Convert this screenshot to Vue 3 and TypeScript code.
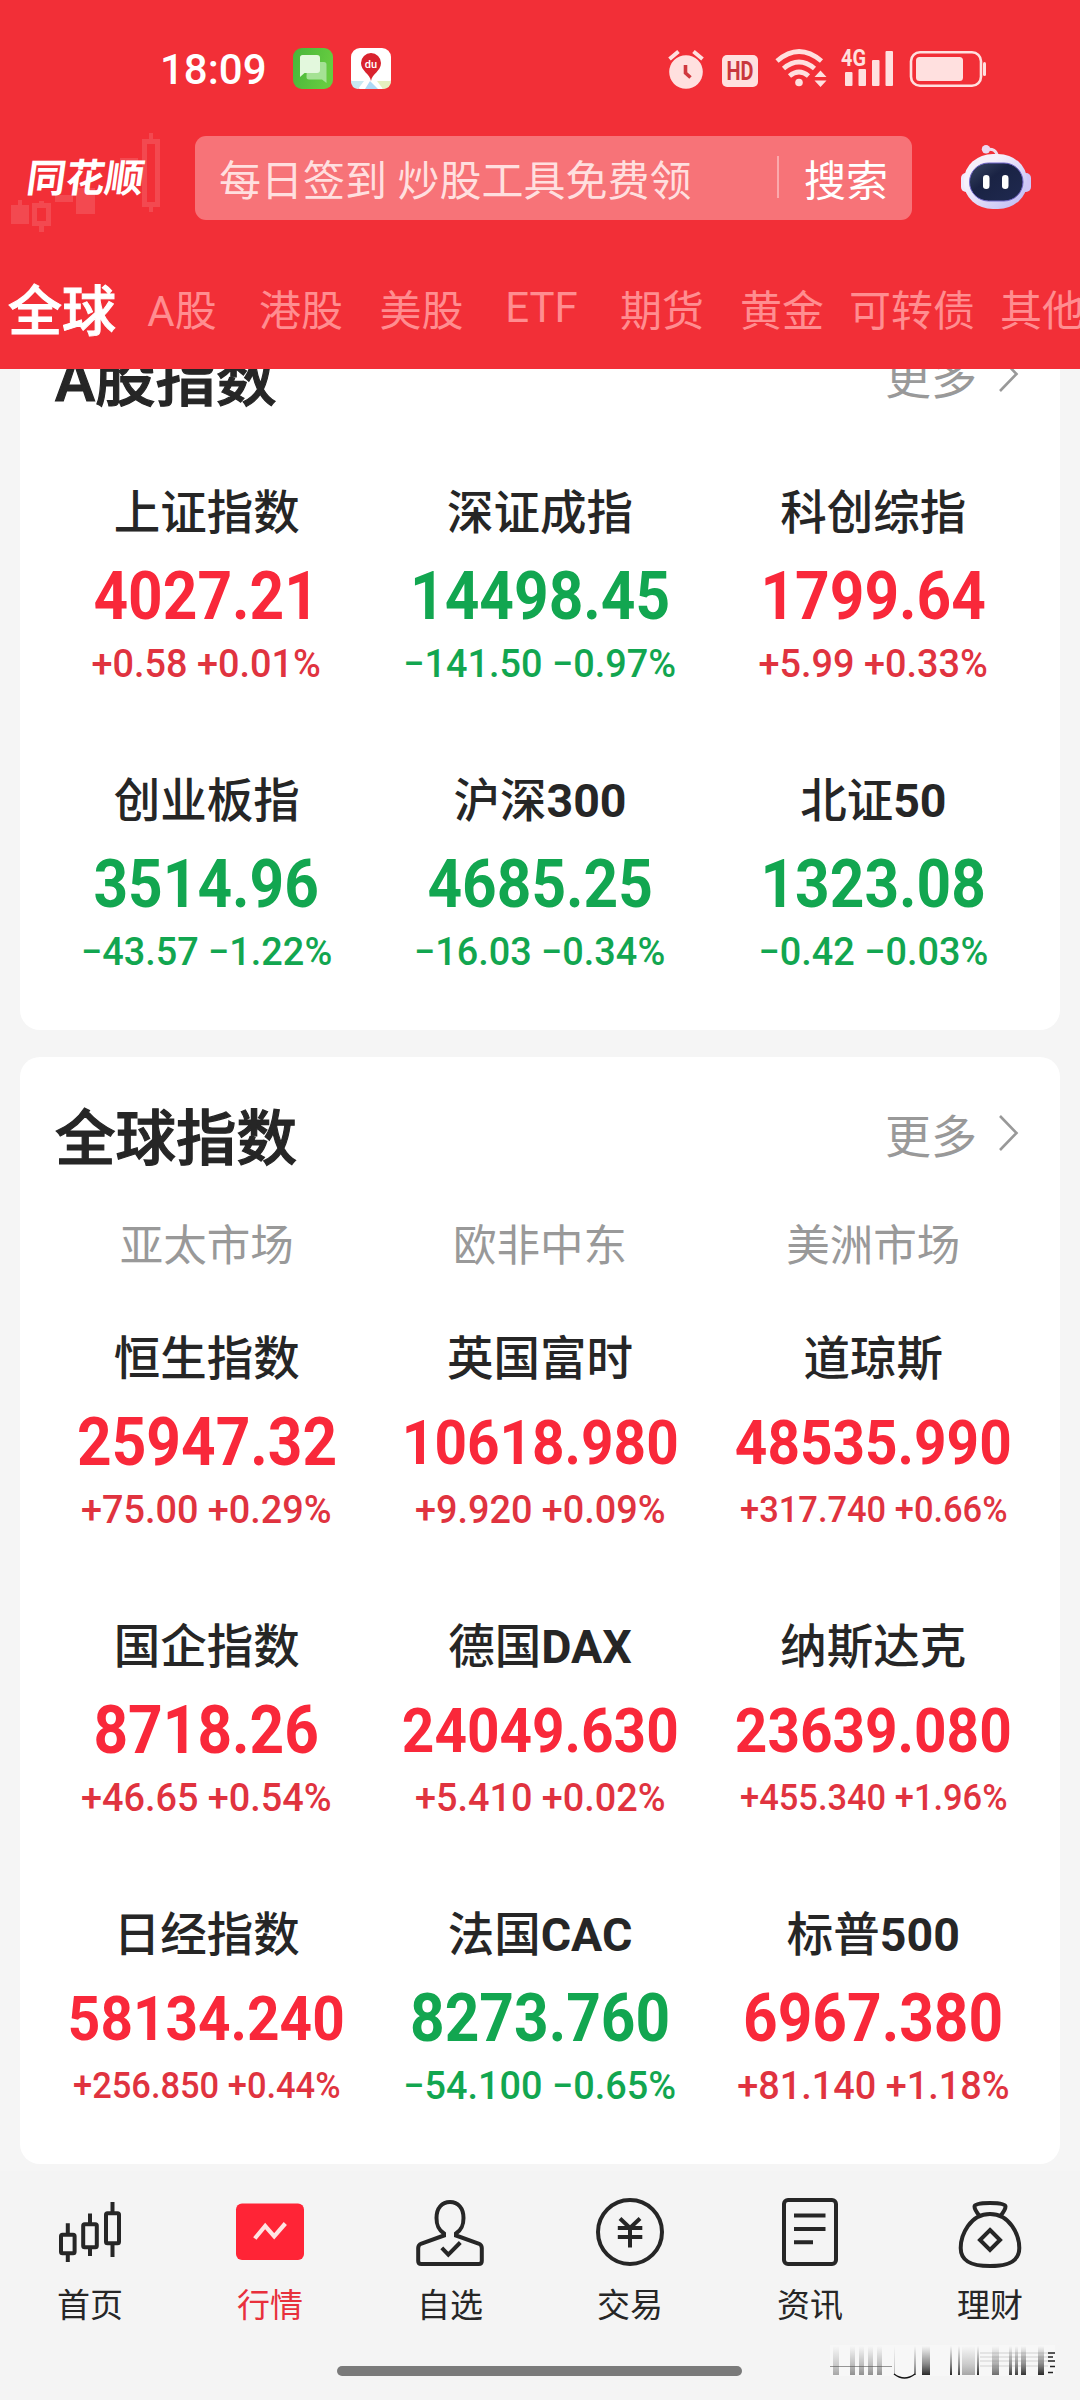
<script setup lang="ts">
type Trend = 'up' | 'down'

interface Quote {
  name: string
  code?: string
  value: string
  delta: string
  trend: Trend
}

interface Tab {
  label: string
  width: number
}

const tabs: Tab[] = [
  { label: 'A股', width: 116 },
  { label: '港股', width: 122 },
  { label: '美股', width: 119 },
  { label: 'ETF', width: 121 },
  { label: '期货', width: 120 },
  { label: '黄金', width: 120 },
  { label: '可转债', width: 140 },
  { label: '其他', width: 120 },
]

const domestic: Quote[] = [
  { name: '上证指数', value: '4027.21', delta: '+0.58 +0.01%', trend: 'up' },
  { name: '深证成指', value: '14498.45', delta: '−141.50 −0.97%', trend: 'down' },
  { name: '科创综指', value: '1799.64', delta: '+5.99 +0.33%', trend: 'up' },
  { name: '创业板指', value: '3514.96', delta: '−43.57 −1.22%', trend: 'down' },
  { name: '沪深', code: '300', value: '4685.25', delta: '−16.03 −0.34%', trend: 'down' },
  { name: '北证', code: '50', value: '1323.08', delta: '−0.42 −0.03%', trend: 'down' },
]

const markets: string[] = ['亚太市场', '欧非中东', '美洲市场']

const overseas: Quote[] = [
  { name: '恒生指数', value: '25947.32', delta: '+75.00 +0.29%', trend: 'up' },
  { name: '英国富时', value: '10618.980', delta: '+9.920 +0.09%', trend: 'up' },
  { name: '道琼斯', value: '48535.990', delta: '+317.740 +0.66%', trend: 'up' },
  { name: '国企指数', value: '8718.26', delta: '+46.65 +0.54%', trend: 'up' },
  { name: '德国', code: 'DAX', value: '24049.630', delta: '+5.410 +0.02%', trend: 'up' },
  { name: '纳斯达克', value: '23639.080', delta: '+455.340 +1.96%', trend: 'up' },
  { name: '日经指数', value: '58134.240', delta: '+256.850 +0.44%', trend: 'up' },
  { name: '法国', code: 'CAC', value: '8273.760', delta: '−54.100 −0.65%', trend: 'down' },
  { name: '标普', code: '500', value: '6967.380', delta: '+81.140 +1.18%', trend: 'up' },
]

// Long figures step down a size so that they stay inside their column.
const isLongValue = (q: Quote): boolean => q.value.length > 8
const isLongDelta = (q: Quote): boolean => q.delta.length > 14

const groups = [
  { title: 'A股指数', markets: [] as string[], quotes: domestic },
  { title: '全球指数', markets, quotes: overseas },
]

const nav: string[] = ['首页', '行情', '自选', '交易', '资讯', '理财']

// x, width, opacity of the faded strokes in the corner stamp
const streaks: [number, number, number][] = [
  [3, 6, 0.35], [20, 5, 0.45], [29, 5, 0.45], [38, 5, 0.45], [47, 5, 0.45],
  [64, 1, 0.3], [84, 2, 0.6], [92, 8, 0.9], [120, 2, 0.9], [128, 2, 0.8],
  [132, 13, 0.35], [147, 2, 0.9], [162, 7, 0.6], [179, 3, 0.8], [185, 3, 0.8],
  [191, 5, 0.85], [208, 6, 0.9],
]
</script>

<template>
  <div class="screen">
    <header class="top">
      <div class="status">
        <span class="clock">18:09</span>
        <svg class="app-a" width="40" height="41" viewBox="0 0 40 41">
          <defs>
            <linearGradient id="msg" x1="0" y1="0" x2="1" y2="0.3">
              <stop offset="0" stop-color="#47b53a" />
              <stop offset="1" stop-color="#66cc40" />
            </linearGradient>
          </defs>
          <rect width="40" height="41" rx="9" fill="url(#msg)" />
          <path d="M14 14h17q2.500 0 2.500 2.500V35l-4.500-3.500H16q-2.500 0-2.500-2.500z" fill="#a5e294" />
          <path d="M9.500 7H24q3 0 3 3v12q0 3-3 3H11.500L7 29V9.500Q7 7 9.500 7z" fill="#e3f8dd" />
        </svg>
        <svg class="app-b" width="40" height="41" viewBox="0 0 40 41">
          <rect width="40" height="41" rx="9" fill="#fff" />
          <path d="M0 33h13l-6 8Q0 40 0 33z" fill="#c8e9f1" />
          <path d="M14 41l5-8 8 8z" fill="#aed8f6" />
          <path d="M26 33h14q0 7-8 8z" fill="#e5efc0" />
          <path d="M20 33c-1-7-10-10-10-18a10 10 0 0 1 20 0c0 8-9 11-10 18z" fill="#d9232e" />
          <text x="20" y="20" text-anchor="middle" font-size="11" font-weight="500" fill="#fff">du</text>
        </svg>
        <svg class="indicators" width="320" height="44" viewBox="668 46 320 44" fill="#ffe0df">
          <circle cx="686" cy="72" r="16.800" />
          <path d="M669.500 59l9-7.500M702.500 59l-9-7.500" stroke="#ffe0df" stroke-width="4" />
          <path d="M685.500 65v8l5 4.500" fill="none" stroke="#d0393f" stroke-width="3.600" />
          <rect x="722" y="55" width="36" height="32" rx="5" />
          <text x="740" y="80" text-anchor="middle" font-size="25" font-weight="700" fill="#c9373d" textLength="27" lengthAdjust="spacingAndGlyphs">HD</text>
          <g fill="none" stroke="#ffe0df" stroke-width="4.800">
            <path d="M777 61q22-19 44.500 0" />
            <path d="M783.500 68.500q15.500-13 31 0" />
            <path d="M789.500 76q9.500-8 19 0" />
          </g>
          <circle cx="799" cy="82.500" r="3.800" />
          <path d="M814.500 77h12l-6-6.500zM814.500 80.500h12l-6 6.500z" />
          <text x="841" y="66" font-size="24" font-weight="700" textLength="25" lengthAdjust="spacingAndGlyphs">4G</text>
          <rect x="845" y="72" width="7.500" height="14" rx="1" />
          <rect x="858.500" y="69" width="7.500" height="17" rx="1" />
          <rect x="872" y="60" width="7.500" height="26" rx="1" />
          <rect x="885.500" y="51" width="7.500" height="35" rx="1" />
          <rect x="911" y="52.300" width="70" height="33.500" rx="9" fill="none" stroke="#ffe0df" stroke-width="2.600" />
          <rect x="916" y="57" width="47" height="24" rx="3.500" />
          <rect x="983" y="62" width="3" height="14" rx="1.500" />
        </svg>
      </div>

      <div class="search-row">
        <div class="brand">
          <svg class="candles" width="165" height="104" viewBox="0 130 165 104" fill="#fff" fill-opacity="0.13">
            <path d="M11 205h7v-5h4v5h7v19H11z" />
            <path fill-rule="evenodd" d="M32 203h7v-2h5v2h7v23h-7v6h-5v-6h-7zm5 5v13h9v-13z" />
            <path d="M55 195h18v7H55zM76 188h19v26H76zM120 158h18v6h-18z" />
            <path fill-rule="evenodd" d="M142 139h7v-6h4v6h7v68h-7v5h-4v-5h-7zm5 5v58h8v-58z" />
          </svg>
          <span class="brand-name">同花顺</span>
        </div>
        <div class="search">
          <span class="hint">每日签到 炒股工具免费领</span>
          <span class="bar"></span>
          <span class="go">搜索</span>
        </div>
        <svg class="robot" width="70" height="66" viewBox="0 0 70 66">
          <defs>
            <linearGradient id="shell" x1="0" y1="0" x2="1" y2="1">
              <stop offset="0.300" stop-color="#f6f0fa" />
              <stop offset="1" stop-color="#b9b6f5" />
            </linearGradient>
            <linearGradient id="face" x1="0" y1="0" x2="1" y2="1">
              <stop offset="0" stop-color="#3a4763" />
              <stop offset="0.400" stop-color="#1a2344" />
              <stop offset="1" stop-color="#1f2950" />
            </linearGradient>
          </defs>
          <path d="M25 4.500q10-2 11.500 7" fill="none" stroke="#f0dcea" stroke-width="3" />
          <circle cx="25" cy="4.300" r="4.200" fill="#ecd9f2" />
          <rect x="0" y="28" width="12" height="19" rx="5" fill="#efe9fb" />
          <rect x="58" y="28" width="12" height="19" rx="5" fill="#cfc6f8" />
          <rect x="3" y="9" width="63" height="55" rx="29" ry="26" fill="url(#shell)" />
          <rect x="8.500" y="18" width="53.500" height="38" rx="19" fill="url(#face)" stroke="#7166c9" stroke-width="1" />
          <rect x="22" y="30" width="6.500" height="14" rx="3.200" fill="#fff" />
          <rect x="41" y="30" width="6.500" height="14" rx="3.200" fill="#fff" />
        </svg>
      </div>

      <nav class="tabs">
        <span class="tab active">全球</span>
        <span v-for="t in tabs" :key="t.label" class="tab" :style="{ width: t.width + 'px' }">{{ t.label }}</span>
      </nav>
    </header>

    <main class="content">
      <section v-for="g in groups" :key="g.title" class="card">
        <div class="card-head">
          <h2>{{ g.title }}</h2>
          <span class="more">
            更多
            <svg width="20" height="38" viewBox="0 0 20 38"><path d="M1 2l16.500 17L1 36" fill="none" stroke="#999" stroke-width="2.600" /></svg>
          </span>
        </div>
        <div v-if="g.markets.length" class="markets">
          <span v-for="m in g.markets" :key="m">{{ m }}</span>
        </div>
        <div class="grid">
          <div v-for="q in g.quotes" :key="q.value" class="quote" :class="q.trend">
            <span class="name">{{ q.name }}<b v-if="q.code">{{ q.code }}</b></span>
            <span class="value" :class="{ long: isLongValue(q) }">{{ q.value }}</span>
            <span class="delta" :class="{ long: isLongDelta(q) }">{{ q.delta }}</span>
          </div>
        </div>
      </section>
    </main>

    <footer class="bottom">
      <div class="nav">
        <div v-for="(n, i) in nav" :key="n" class="nav-item" :class="{ on: i === 1 }">
          <svg width="80" height="80" viewBox="0 0 80 80" fill="none" stroke="#262626" stroke-width="4">
            <g v-if="i === 0">
              <rect x="11" y="42.700" width="13.600" height="18.600" rx="1.500" />
              <rect x="33.200" y="32.300" width="13.600" height="23" rx="1.500" />
              <rect x="56" y="21.300" width="13" height="30" rx="1.500" />
              <path d="M17.800 31.300v10M17.800 62v8M40 21.500v10M40 56v8M62.500 10v11M62.500 52v13" />
            </g>
            <g v-else-if="i === 1" stroke="none">
              <rect x="6" y="11.500" width="68" height="56.500" rx="6" fill="#ff2436" />
              <path d="M24.800 46.500L35.200 34l9 10.300L55.300 31.500" stroke="#ffe3e3" stroke-width="4.200" />
            </g>
            <g v-else-if="i === 2">
              <path d="M33 43.500V41.500C28 37.500 26.500 33 26.500 26 26.500 16 32 10 40 10s13.500 6 13.500 16c0 7-1.500 11.500-6.500 15.500v2l21.500 8q3.300 1.300 3.300 4.500v13q0 3-3 3H11.200q-3 0-3-3V56q0-3.200 3.300-4.500z" stroke="none" />
              <path d="M34 43.500V41.500C28 37.500 26.500 33 26.500 26 26.500 16 32 10 40 10s13.500 6 13.500 16c0 7-1.500 11.500-7.500 15.500v2l22.500 8q3.300 1.300 3.300 4.500v13q0 3-3 3H11.200q-3 0-3-3V56q0-3.200 3.300-4.500z" />
              <path d="M31.800 55.800l6.500 6.800L50.300 50.500" />
            </g>
            <g v-else-if="i === 3">
              <circle cx="40" cy="40" r="32" />
              <path d="M27.800 36h24.500M27.800 45h24.500M40 36v19.500M30 26.500l10 9.500 10-9.500" />
            </g>
            <g v-else-if="i === 4">
              <rect x="14" y="8" width="52" height="64" rx="4" />
              <path d="M24 23.400h31.500M24 37h31.500M24 50.300h19" />
            </g>
            <g v-else>
              <path d="M40 22C20 22 10.700 43 10.700 56c0 13 10 18 29.300 18s29.300-5 29.300-18C69.300 43 60 22 40 22z" />
              <path d="M29.500 24q-5-6.500-5-9.500 0-3.500 15.500-3.500t15.500 3.500q0 3-5 9.500" />
              <path d="M40 38l10 10-10 10-10-10z" />
            </g>
          </svg>
          <span>{{ n }}</span>
        </div>
      </div>
      <div class="home-bar"></div>
      <svg class="stamp" width="230" height="40" viewBox="0 0 230 40">
        <defs>
          <linearGradient id="fade" x1="0" y1="0" x2="0" y2="1">
            <stop offset="0" stop-color="#333" stop-opacity="0" />
            <stop offset="0.600" stop-color="#333" stop-opacity="0.600" />
            <stop offset="1" stop-color="#111" />
          </linearGradient>
        </defs>
        <rect x="0" y="4" width="225" height="31" fill="#fff" fill-opacity="0.300" />
        <rect v-for="s in streaks" :key="s[0]" :x="s[0]" y="5" :width="s[1]" height="29" fill="url(#fade)" :opacity="s[2]" />
        <path d="M0 25.500h62" stroke="#555" stroke-opacity="0.600" stroke-width="1.200" />
        <path d="M64 33q10.500 8 21 0" fill="none" stroke="#111" stroke-width="1.500" />
        <path d="M150 12h68M150 16h68M150 20h68M150 25h68" stroke="#777" stroke-opacity="0.300" stroke-width="1" />
        <path d="M218 12h7M218 16h5M218 20h7M220 25.500h5M218 31.500h5" stroke="#222" stroke-width="1.500" />
      </svg>
    </footer>
  </div>
</template>

<style>
html,
body {
  margin: 0;
  background: #f5f5f5;
}
</style>

<style scoped>
.screen {
  width: 1080px;
  height: 2400px;
  overflow: hidden;
  display: flex;
  flex-direction: column;
  background: #f5f5f5;
  font-family: Roboto, 'Noto Sans CJK SC', sans-serif;
  color: #262626;
}

.screen svg {
  display: block;
  flex: none;
}

.top {
  flex: none;
  height: 369px;
  background: #f22f37;
  color: #fff;
  display: flex;
  flex-direction: column;
  overflow: hidden;
}

.status {
  height: 90px;
  padding-top: 46px;
  box-sizing: border-box;
  display: flex;
  align-items: center;
}

.clock {
  width: 133px;
  padding-left: 160px;
  padding-top: 3px;
  font-size: 42px;
  line-height: 44px;
  font-weight: 500;
}

.app-b {
  margin-left: 18px;
}

.indicators {
  margin-left: 277px;
}

.search-row {
  height: 160px;
  display: flex;
  align-items: center;
  margin-top: 8px;
}

.brand {
  position: relative;
  width: 195px;
  height: 104px;
}

.candles {
  position: absolute;
  left: 0;
  top: 4px;
}

.brand-name {
  position: absolute;
  left: 27px;
  top: 25px;
  font-size: 39px;
  line-height: 56px;
  font-weight: 700;
  transform: skewX(-8deg);
}

.search {
  width: 717px;
  height: 84px;
  border-radius: 11px;
  background: #f77378;
  display: flex;
  align-items: center;
  box-sizing: border-box;
  padding: 0 0 2px 24px;
  font-size: 42px;
  font-weight: 400;
}

.hint {
  width: 558px;
  color: #ffdfdf;
  white-space: nowrap;
}

.bar {
  width: 2px;
  height: 42px;
  background: #fba9ac;
}

.go {
  margin-left: 25px;
}

.robot {
  margin-left: 49px;
}

.tabs {
  display: flex;
  height: 99px;
  align-items: center;
  font-size: 42px;
  color: #ff8d90;
}

.tab {
  flex: none;
  text-align: center;
  white-space: nowrap;
}

.tab.active {
  width: 124px;
  box-sizing: border-box;
  padding-left: 8px;
  text-align: left;
  font-size: 54px;
  font-weight: 500;
  -webkit-text-stroke: 1px currentColor;
  color: #fff;
}

.content {
  height: 1802px;
  flex: none;
  overflow: hidden;
  padding: 0 20px;
}

.card {
  box-sizing: border-box;
  height: 1107px;
  background: #fff;
  border-radius: 20px;
}

.card:first-child {
  margin-top: -71px;
  margin-bottom: 27px;
  height: 732px;
}

.card-head {
  height: 157px;
  padding: 0 41px 5px 35px;
  box-sizing: border-box;
  display: flex;
  align-items: center;
  justify-content: space-between;
}

h2 {
  margin: 0;
  font-size: 60.5px;
  font-weight: 500;
  -webkit-text-stroke: 1.2px currentColor;
}

.more {
  display: flex;
  align-items: center;
  font-size: 46px;
  color: #999;
  gap: 22px;
}

.markets {
  display: grid;
  grid-template-columns: repeat(3, 1fr);
  margin: 0 20px;
  height: 64px;
  line-height: 65px;
  text-align: center;
  font-size: 43.5px;
  color: #999;
}

.grid {
  display: grid;
  grid-template-columns: repeat(3, 1fr);
  grid-auto-rows: 288px;
  margin: 0 20px;
  padding-top: 23px;
}

.markets + .grid {
  padding-top: 46px;
}

.quote {
  display: flex;
  flex-direction: column;
  align-items: center;
  white-space: nowrap;
}

.name {
  height: 70px;
  line-height: 70px;
  font-size: 46.5px;
  font-weight: 500;
}

.name b {
  font-weight: 700;
}

.value {
  height: 98px;
  line-height: 98px;
  font-size: 66px;
  font-weight: 700;
  transform: scaleX(0.915);
}

.value.long {
  font-size: 62px;
}

.delta {
  height: 36px;
  line-height: 36px;
  font-size: 39px;
  font-weight: 500;
  transform: scaleX(0.97);
}

.delta.long {
  font-size: 36px;
  transform: scaleX(0.957);
}

.up .value {
  color: #f9283a;
}

.up .delta {
  color: #e0333f;
}

.down .value,
.down .delta {
  color: #12a650;
}

.bottom {
  position: relative;
  flex: none;
  height: 229px;
  background: #f4f4f4;
}

.nav {
  display: flex;
  padding-top: 21px;
}

.nav-item {
  width: 180px;
  display: flex;
  flex-direction: column;
  align-items: center;
  font-size: 33px;
}

.nav-item span {
  margin-top: 11px;
  line-height: 46px;
}

.nav-item.on {
  color: #e8303c;
}

.home-bar {
  width: 405px;
  height: 10px;
  border-radius: 5px;
  background: #7a7a7a;
  margin: 37px 0 0 337px;
}

.stamp {
  position: absolute;
  left: 830px;
  top: 170px;
}
</style>
